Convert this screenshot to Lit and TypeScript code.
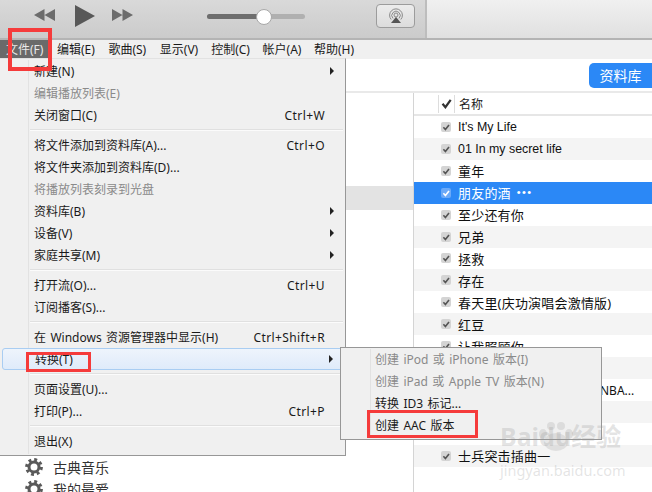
import { LitElement, html, css, svg } from "lit";
import { customElement } from "lit/decorators.js";

type Item = { t?: string; k?: string; dis?: boolean; sub?: boolean; hov?: boolean; sep?: boolean };

const MENU: Item[] = [
  { t: "新建(N)", sub: true },
  { t: "编辑播放列表(E)", dis: true },
  { t: "关闭窗口(C)", k: "Ctrl+W" },
  { sep: true },
  { t: "将文件添加到资料库(A)...", k: "Ctrl+O" },
  { t: "将文件夹添加到资料库(D)..." },
  { t: "将播放列表刻录到光盘", dis: true },
  { t: "资料库(B)", sub: true },
  { t: "设备(V)", sub: true },
  { t: "家庭共享(M)", sub: true },
  { sep: true },
  { t: "打开流(O)...", k: "Ctrl+U" },
  { t: "订阅播客(S)..." },
  { sep: true },
  { t: "在 Windows 资源管理器中显示(H)", k: "Ctrl+Shift+R" },
  { t: "转换(T)", sub: true, hov: true },
  { sep: true },
  { t: "页面设置(U)..." },
  { t: "打印(P)...", k: "Ctrl+P" },
  { sep: true },
  { t: "退出(X)" },
];

const SUB: Item[] = [
  { t: "创建 iPod 或 iPhone 版本(I)", dis: true },
  { t: "创建 iPad 或 Apple TV 版本(N)", dis: true },
  { t: "转换 ID3 标记..." },
  { t: "创建 AAC 版本" },
];

const SONGS = [
  "It's My Life", "01 In my secret life", "童年", "朋友的酒", "至少还有你", "兄弟", "拯救", "存在",
  "春天里(庆功演唱会激情版)", "红豆", "让我照顾你", "", "NBA...", "", "", "士兵突击插曲一",
];

const BARS = ["文件(F)", "编辑(E)", "歌曲(S)", "显示(V)", "控制(C)", "帐户(A)", "帮助(H)"];

const gear = html`<svg class="gear" viewBox="0 0 18 18" width="18" height="18">
  <circle cx="9" cy="9" r="7.4" fill="none" stroke="#5a5a5a" stroke-width="3" stroke-dasharray="2.9 2.91"></circle>
  <circle cx="9" cy="9" r="5" fill="none" stroke="#5a5a5a" stroke-width="3"></circle>
</svg>`;

const check = svg`<path d="M2.4 5.3 4.4 7.6 8 2.9" fill="none" stroke="currentColor" stroke-width="1.6"></path>`;
const checkBold = svg`<path d="M1.4 5.2 4 8.4 8.8 1.6" fill="none" stroke="currentColor" stroke-width="2"></path>`;

@customElement("app-root")
export class AppRoot extends LitElement {
  static styles = css`
    :host {
      display: block;
      position: relative;
      width: 652px;
      height: 492px;
      overflow: hidden;
      background: #fff;
      font-family: "Noto Sans", "Noto Sans CJK SC", sans-serif;
      font-size: 12px;
      color: #1a1a1a;
    }
    .toolbar { display: flex; height: 38px; border-bottom: 2px solid #b4b4b4; box-sizing: content-box; }
    .left {
      width: 425px; display: flex; align-items: flex-start; flex: none;
      background: linear-gradient(#d9d9d9, #cbcbcb);
      border-right: 2px solid #bdbdbd;
    }
    .right { flex: 1; background: linear-gradient(#f0f0f0, #e0e0e0); }
    .ctl { flex: none; }
    .prev { margin: 9px 0 0 34px; }
    .play { margin: 5px 0 0 20px; }
    .next { margin: 9px 0 0 17px; }
    .slider { position: relative; width: 98px; height: 5px; margin: 14px 0 0 74px; border-radius: 3px; background: #b0b0b0; flex: none; }
    .slider i { display: block; width: 56px; height: 5px; border-radius: 3px; background: #6e6e6e; }
    .knob { position: absolute; left: 49px; top: -5px; width: 14px; height: 14px; border-radius: 50%; background: #fff; border: 1px solid #a8a8a8; }
    .air {
      width: 37px; height: 22px; margin: 4px 0 0 71px; flex: none; border: 1px solid #9c9c9c; border-radius: 4px;
      background: linear-gradient(#ececec, #dcdcdc); display: flex; align-items: center; justify-content: center;
    }
    .bar { display: flex; height: 19px; background: #f0f0f0; align-items: center; }
    .bar span { box-sizing: border-box; padding-left: 7px; line-height: 19px; white-space: nowrap; width: 51.4px; }
    .bar span:first-child { background: #6a6a6a; color: #e8e8e8; width: 50px; padding-left: 6px; }
    .top { height: 32px; border-bottom: 2px solid #e9e9e9; display: flex; justify-content: flex-end; align-items: flex-start; box-sizing: content-box; }
    .lib {
      width: 63px; height: 25px; margin-top: 4px; background: #2b88f6; color: #fff; font-size: 14px; line-height: 25px;
      text-align: center; border-radius: 5px 0 0 5px;
    }
    .main { display: flex; }
    .side { width: 414px; flex: none; box-sizing: border-box; border-right: 1px solid #d4d4d4; height: 400px; }
    .sel { height: 24px; margin-top: 93px; background: #e3e3e3; }
    .srow { display: flex; align-items: center; gap: 10px; padding-left: 25px; height: 22px; font-size: 14px; color: #333; }
    .srow.first { margin-top: 246px; }
    .list { flex: 1; min-width: 0; }
    .head { display: flex; align-items: center; height: 21px; border-bottom: 2px solid #e6e6e6; font-size: 12px; }
    .hcheck { width: 15px; height: 18px; margin-left: 24px; border-left: 1px solid #ddd; border-right: 1px solid #ddd; display: flex; align-items: center; justify-content: center; color: #333; }
    .hname { margin-left: 4px; }
    .row { display: flex; align-items: center; height: 21.93px; font-size: 13px; color: #111; }
    .row.alt { background: #f4f4f4; }
    .row.on { background: #2b88f6; color: #fff; }
    .cb { width: 10px; height: 10px; margin-left: 27px; border-radius: 2px; background: #d4d4d4; color: #555; flex: none; display: block; }
    .row.on .cb { background: #6aa9f8; color: #fff; }
    .nm { margin-left: 7px; white-space: nowrap; letter-spacing: .2px; }
    .nm.lat { font-family: "Liberation Sans", sans-serif; font-size: 12.4px; letter-spacing: 0; }
    .nm.tail { margin-left: 149px; font-family: "Noto Sans", sans-serif; font-size: 12px; letter-spacing: 0; }
    .dots { margin-left: 6px; margin-top: -2px; font: 11px "Liberation Sans", sans-serif; letter-spacing: 1.4px; }

    .menu {
      position: absolute; background: #f0f0f0; box-sizing: border-box;
      border: 1px solid #979797; word-spacing: 1.3px;
    }
    .m1 { left: -1px; top: 58px; width: 347px; height: 398px; padding: 1px 2px 3px 1px; border-top-color: #e2e2e2; }
    .m2 { left: 340px; top: 347px; width: 262px; height: 93px; padding: 0 2px; }
    .gut { position: absolute; top: 1px; bottom: 1px; width: 1px; background: #e2e2e2; }
    .m1 .gut { left: 28px; }
    .m2 .gut { left: 29px; }
    .it { display: flex; align-items: center; height: 22px; padding-left: 33px; padding-right: 9px; white-space: nowrap; box-sizing: border-box; position: relative; }
    .m2 .it { padding-left: 32px; }
    .it.dis { color: #8a8a8a; }
    .it .k { margin-left: auto; padding-right: 9px; letter-spacing: .4px; }
    .it .ar { margin-left: auto; width: 0; height: 0; border-left: 4px solid #222; border-top: 4px solid transparent; border-bottom: 4px solid transparent; }
    .it.hov {
      margin-left: 1px; padding-left: 32px; background: linear-gradient(#eef4fc, #dfebfa); border: 1px solid #a9cdf2; border-radius: 3px;
      box-sizing: border-box;
    }
    .sep { height: 2px; margin: 3px 0 3px 29px; background: #e0e0e0; border-bottom: 1px solid #fbfbfb; box-sizing: border-box; }

    .red { position: absolute; box-sizing: border-box; border: 3px solid #f53b3b; pointer-events: none; }
    .r1 { left: 8px; top: 28px; width: 44px; height: 43px; border-width: 4px; }
    .r2 { left: 26px; top: 352px; width: 65px; height: 20px; }
    .r3 { left: 367px; top: 410px; width: 111px; height: 28px; }

    .wm { position: absolute; left: 500px; top: 420px; width: 120px; height: 60px; color: rgba(150,150,150,.26); pointer-events: none; }
    .wm .a { position: absolute; left: 0; top: 0; font-size: 25px; font-weight: 700; line-height: 32px; white-space: nowrap; }
    .wm .b { position: absolute; left: 0; top: 41px; font-size: 14.5px; line-height: 18px; white-space: nowrap; }
    .wm svg { position: absolute; left: 37px; top: 2px; }
  `;

  private item(i: Item) {
    if (i.sep) return html`<div class="sep"></div>`;
    return html`<div class="it ${i.dis ? "dis" : ""} ${i.hov ? "hov" : ""}">
      <span>${i.t}</span>
      ${i.k ? html`<span class="k">${i.k}</span>` : ""}
      ${i.sub ? html`<span class="ar"></span>` : ""}
    </div>`;
  }

  render() {
    return html`
      <div class="toolbar">
        <div class="left">
          <svg class="ctl prev" width="21" height="12" viewBox="0 0 21 12"><path d="M10.5 0V12L0 6ZM21 0V12L10.5 6Z" fill="#6c6c6c"></path></svg>
          <svg class="ctl play" width="20" height="22" viewBox="0 0 20 22"><path d="M0 0 20 11 0 22Z" fill="#585858"></path></svg>
          <svg class="ctl next" width="21" height="12" viewBox="0 0 21 12"><path d="M0 0 10.5 6 0 12ZM10.5 0 21 6 10.5 12Z" fill="#6c6c6c"></path></svg>
          <div class="slider"><i></i><span class="knob"></span></div>
          <div class="air">
            <svg width="16" height="16" viewBox="0 0 16 16" fill="none" stroke="#8a8a8a" stroke-width="1">
              <path d="M3.2 11.5A6.4 6.4 0 1 1 12.8 11.5"></path>
              <path d="M5 10.4A4.2 4.2 0 1 1 11 10.4"></path>
              <circle cx="8" cy="7" r="2"></circle>
              <path d="M8 9 13 15H3Z" fill="#555" stroke="none"></path>
            </svg>
          </div>
        </div>
        <div class="right"></div>
      </div>
      <div class="bar">${BARS.map((b) => html`<span>${b}</span>`)}</div>
      <div class="top"><div class="lib">资料库</div></div>
      <div class="main">
        <div class="side">
          <div class="sel"></div>
          <div class="srow first">${gear}<span>古典音乐</span></div>
          <div class="srow">${gear}<span>我的最爱</span></div>
        </div>
        <div class="list">
          <div class="head">
            <div class="hcheck"><svg width="11" height="11" viewBox="0 0 10 10">${checkBold}</svg></div>
            <span class="hname">名称</span>
          </div>
          ${SONGS.map((s, i) => html`<div class="row ${i === 3 ? "on" : i % 2 ? "alt" : ""}">
            <svg class="cb" viewBox="0 0 10 10">${check}</svg>
            <span class="nm ${s === "NBA..." ? "tail" : ""} ${/^[\x20-\x7e]+$/.test(s) ? "lat" : ""}">${s}</span>
            ${i === 3 ? html`<span class="dots">•••</span>` : ""}
          </div>`)}
        </div>
      </div>

      <div class="menu m1"><div class="gut"></div>${MENU.map((i) => this.item(i))}</div>
      <div class="menu m2"><div class="gut"></div>${SUB.map((i) => this.item(i))}</div>

      <div class="wm">
        <span class="a">Baidu经验</span>
        <svg width="38" height="30" viewBox="0 0 38 30" fill="rgba(150,150,150,.22)">
          <ellipse cx="6" cy="12" rx="4" ry="5"></ellipse><ellipse cx="14" cy="4" rx="4" ry="4"></ellipse>
          <ellipse cx="24" cy="4" rx="4" ry="4"></ellipse><ellipse cx="32" cy="12" rx="4" ry="5"></ellipse>
          <ellipse cx="19" cy="20" rx="12" ry="9"></ellipse>
        </svg>
        <span class="b">jingyan.baidu.com</span>
      </div>

      <div class="red r1"></div>
      <div class="red r2"></div>
      <div class="red r3"></div>
    `;
  }
}
